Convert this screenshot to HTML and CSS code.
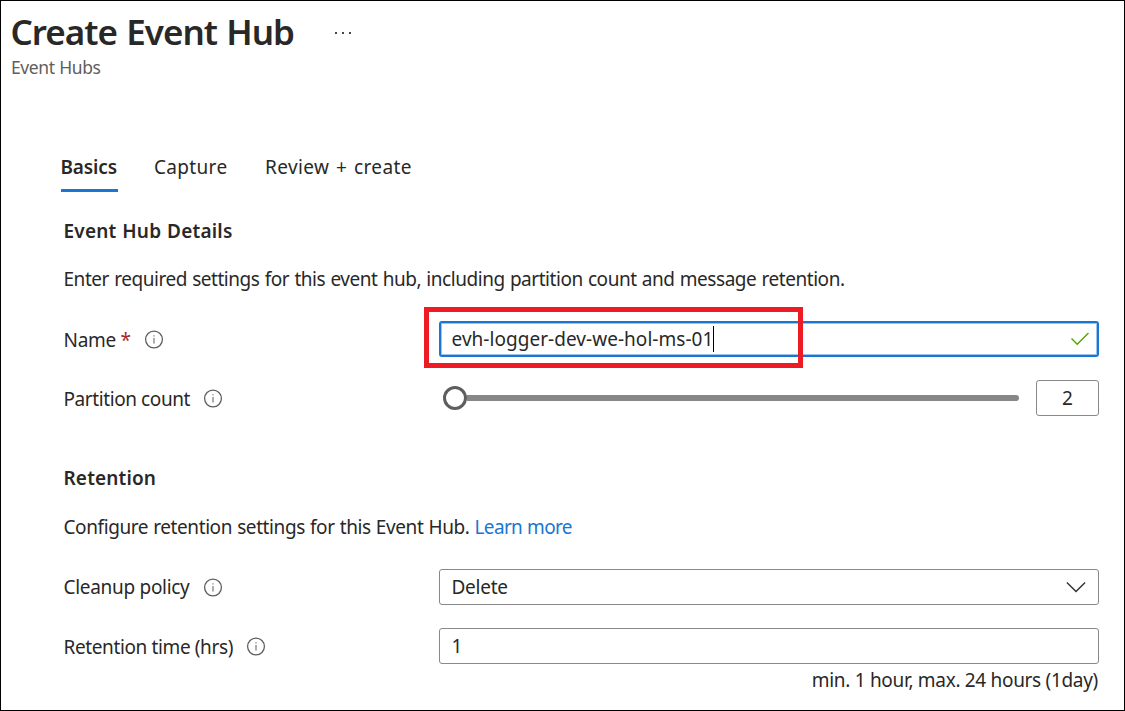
FILE: index.html
```html
<!DOCTYPE html>
<html lang="en">
<head>
<meta charset="utf-8">
<title>Create Event Hub</title>
<link rel="stylesheet" href="styles.css">
</head>
<body>
<svg class="defs" width="0" height="0" aria-hidden="true">
  <symbol id="info" viewBox="0 0 20 20">
    <circle cx="10" cy="10.5" r="8.4" fill="none" stroke="#605e5c" stroke-width="1.3"/>
    <path d="M10 9V14.5" stroke="#858381" stroke-width="1.3"/>
    <path d="M10 6.2V7.6" stroke="#858381" stroke-width="1.3"/>
  </symbol>
</svg>
<main class="page">
  <header class="header">
    <div class="title-row">
      <h1 class="title">Create Event Hub</h1>
      <svg class="more" width="18" height="4" viewBox="0 0 18 4"><path d="M1 1h2v2H1zM8 1h2v2H8zM15 1h2v2h-2z" fill="#484644"/></svg>
    </div>
    <p class="subtitle">Event Hubs</p>
  </header>
  <nav class="tabs">
    <a class="tab tab-active">Basics</a>
    <a class="tab tab-capture">Capture</a>
    <a class="tab tab-review">Review + create</a>
  </nav>
  <section class="section">
    <h2 class="heading heading-details">Event Hub Details</h2>
    <p class="text text-details">Enter required settings for this event hub, including partition count and message retention.</p>
    <div class="row row-name">
      <div class="label"><span class="label-name">Name <b class="required">*</b></span><svg class="info"><use href="#info"/></svg></div>
      <div class="field field-focus">
        <span class="value value-name">evh-logger-dev-we-hol-ms-01</span><i class="caret"></i>
        <svg class="check" width="20" height="16" viewBox="0 0 20 16"><path d="M1.5 7.5L7.2 13.2L18.5 1.9" fill="none" stroke="#57a300" stroke-width="1.4"/></svg>
        <div class="callout"></div>
      </div>
    </div>
    <div class="row">
      <div class="label"><span class="label-partition">Partition count</span><svg class="info"><use href="#info"/></svg></div>
      <div class="slider"><i class="thumb"></i><i class="track"></i></div>
      <div class="field count">2</div>
    </div>
  </section>
  <section class="section retention">
    <h2 class="heading heading-retention">Retention</h2>
    <p class="text text-retention">Configure retention settings for this Event Hub. <a class="link">Learn more</a></p>
    <div class="row">
      <div class="label"><span class="label-cleanup">Cleanup policy</span><svg class="info"><use href="#info"/></svg></div>
      <div class="field">
        <span class="value value-delete">Delete</span>
        <svg class="chevron" width="20" height="12" viewBox="0 0 20 12"><path d="M.9 1.4L10 10.5L19.1 1.4" fill="none" stroke="#323130" stroke-width="1.4"/></svg>
      </div>
    </div>
    <div class="row">
      <div class="label"><span class="label-time">Retention time (hrs)</span><svg class="info"><use href="#info"/></svg></div>
      <div class="field"><span class="value">1</span></div>
    </div>
    <p class="hint"><span class="hint-text">min. 1 hour, max. 24 hours (1day)</span></p>
  </section>
</main>
</body>
</html>
```
FILE: styles.css
```css
* { box-sizing: border-box; }
body {
  margin: 0;
  background: #fff;
  color: #292827;
  font: 19px/28px "Noto Sans", "Open Sans", sans-serif;
  white-space: nowrap;
}
h1, h2, p { margin: 0; }
svg { display: block; flex: none; }
.defs { position: absolute; }
.page {
  width: 1125px;
  height: 711px;
  border: 1px solid #000;
  overflow: hidden;
}
.header { padding: 8px 0 0 10px; }
.title-row { display: flex; align-items: center; gap: 39px; height: 45px; }
.title { width: 284px; font-size: 35px; line-height: 45px; font-weight: 600; letter-spacing: -0.97px; word-spacing: 1px; text-indent: -0.6px; }
.more { margin-top: 2px; }
.subtitle { font-size: 17.5px; line-height: 27px; color: #605e5c; letter-spacing: -0.4px; word-spacing: 0.5px; }
.tabs { display: flex; height: 40px; margin: 71px 0 0 60px; line-height: 30px; }
.tab { flex: none; height: 40px; }
.tab-active { width: 57px; margin-right: 36px; font-weight: 600; border-bottom: 3px solid #1976d2; letter-spacing: -0.15px; text-indent: -0.5px; }
.tab-capture { width: 111px; letter-spacing: 0.33px; }
.tab-review { letter-spacing: 0.4px; word-spacing: 1.3px; }
.section { display: flex; flex-direction: column; margin: 25px 25px 0 63px; }
.retention { margin-top: 48px; }
.heading { font-size: 19px; line-height: 28px; font-weight: 600; text-indent: -0.5px; }
.heading-details { letter-spacing: 0.2px; word-spacing: 0.7px; }
.heading-retention { letter-spacing: 0.15px; }
.text { margin: 20px 0 28px; text-indent: -0.5px; }
.text-details { letter-spacing: -0.46px; word-spacing: 0.77px; }
.text-retention { margin-top: 21px; letter-spacing: -0.41px; word-spacing: 0.6px; }
.link { color: #1976d2; letter-spacing: -0.66px; }
.row { display: flex; align-items: center; height: 36px; }
.row + .row { margin-top: 23px; }
.label { display: flex; align-items: center; gap: 13px; width: 375px; flex: none; letter-spacing: -0.3px; }
.label span { padding-top: 1px; text-indent: -0.5px; }
.label .label-cleanup { padding-top: 0; }
.label-partition { letter-spacing: -0.41px; }
.label-time { letter-spacing: -0.38px; }
.required { color: #a4262c; font-weight: 400; }
.info { width: 20px; height: 20px; }
.field {
  position: relative;
  display: flex;
  align-items: center;
  flex: 1;
  height: 36px;
  padding: 0 12px 0 11.5px;
  border: 1px solid #8a8886;
  border-radius: 3px;
}
.field-focus { border: 2px solid #1976d2; padding: 0 11px 0 10.5px; box-shadow: inset 0 0 0 1px #9cc4ec; }
.value-name { letter-spacing: 0.04px; }
.value-delete { letter-spacing: -0.25px; }
.caret { width: 1px; height: 26px; background: #000; }
.check { margin: 0 -4px 0 auto; }
.callout {
  position: absolute;
  left: -17px;
  top: -16px;
  width: 379px;
  height: 61px;
  border: 5px solid #ed1c24;
}
.slider { display: flex; align-items: center; width: 576px; margin: 0 17px 0 4px; flex: none; }
.thumb { width: 24px; height: 24px; border: 3px solid #605e5c; border-radius: 50%; }
.track { flex: 1; height: 6px; background: #898785; border-radius: 0 3px 3px 0; }
.count { justify-content: center; padding: 0; }
.chevron { margin-left: auto; }
.hint { margin-top: 2px; padding-right: 1px; text-align: right; letter-spacing: -0.31px; }
```
